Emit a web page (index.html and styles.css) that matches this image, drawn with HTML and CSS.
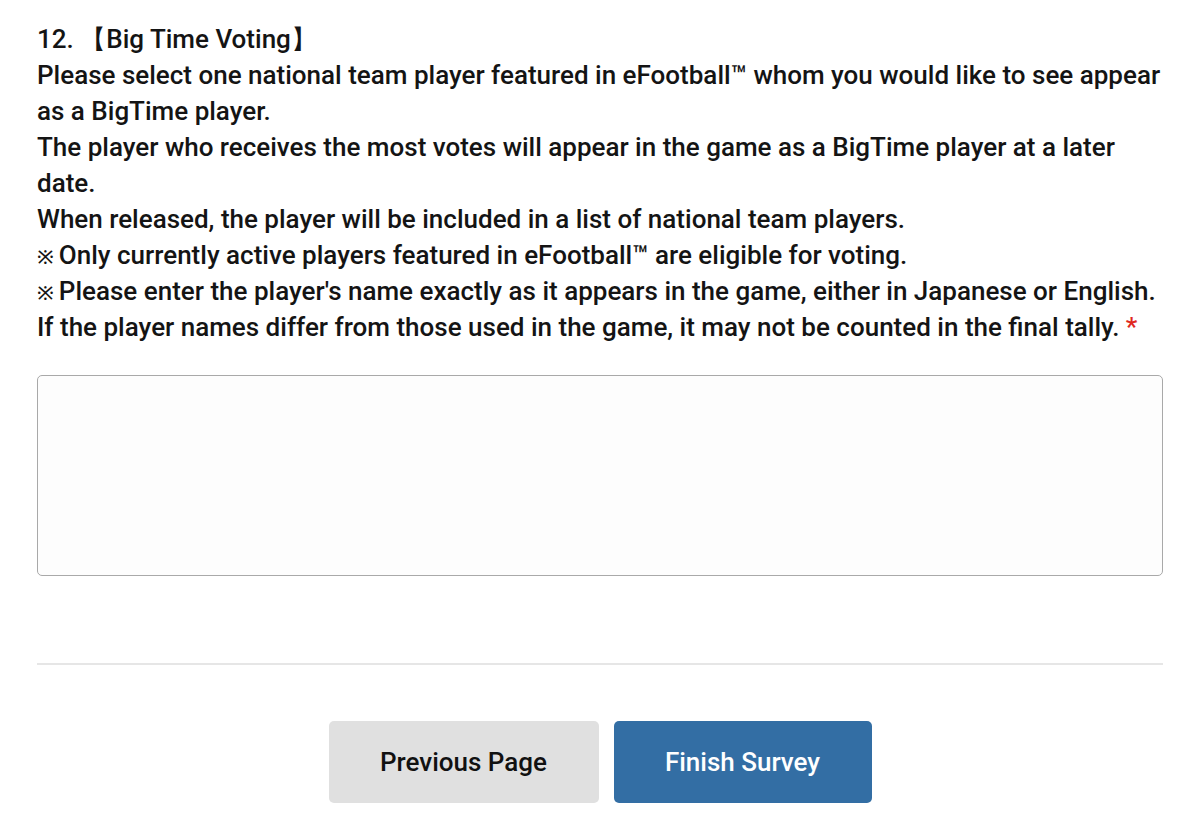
FILE: index.html
```html
<!DOCTYPE html>
<html lang="en">
<head>
    <meta charset="UTF-8">
    <meta name="viewport" content="width=device-width, initial-scale=1.0">
    <title>Survey</title>
    <link rel="stylesheet" href="styles.css">
</head>
<body>
<div class="container">
    <div class="question">
        <p class="question-title">12. 【Big Time Voting】</p>
        <p>Please select one national team player featured in eFootball™ whom you would like to see appear as a BigTime player.</p>
        <p>The player who receives the most votes will appear in the game as a BigTime player at a later date.</p>
        <p>When released, the player will be included in a list of national team players.</p>
        <p><span class="mark">※</span>Only currently active players featured in eFootball™ are eligible for voting.</p>
        <p><span class="mark">※</span>Please enter the player's name exactly as it appears in the game, either in Japanese or English.</p>
        <p>If the player names differ from those used in the game, it may not be counted in the final tally. <span class="required">*</span></p>
    </div>
    <textarea class="answer"></textarea>
    <hr class="divider">
    <div class="buttons">
        <button class="btn btn-prev">Previous Page</button>
        <button class="btn btn-finish">Finish Survey</button>
    </div>
</div>
</body>
</html>
```

FILE: styles.css
```css
body {
    font-family: Roboto, "Noto Sans", sans-serif;
    margin: 0;
    background-color: #fff;
    color: #141414;
}
.container {
    padding: 21px 37px 0 37px;
}
.question {
    font-size: 26px;
    font-weight: 500;
    line-height: 36px;
}
.question p {
    margin: 0;
}
.mark {
    font-size: 20px;
    line-height: 0;
    margin-right: 5px;
}
.required {
    color: #e0281e;
}
.answer {
    display: block;
    box-sizing: border-box;
    width: 100%;
    height: 201px;
    margin-top: 30px;
    border: 1px solid #a9a9a9;
    border-radius: 5px;
    background: #fdfdfd;
    resize: none;
}
.divider {
    border: none;
    border-top: 2px solid #e6e6e6;
    margin: 87px 0 0 0;
}
.buttons {
    display: flex;
    justify-content: center;
    gap: 15px;
    margin-top: 56px;
}
.btn {
    height: 82px;
    border: none;
    border-radius: 5px;
    font-family: Roboto, sans-serif;
    font-size: 26px;
    font-weight: 500;
}
.btn-prev {
    width: 270px;
    background-color: #e0e0e0;
    color: #111;
}
.btn-finish {
    width: 258px;
    background-color: #336ea4;
    color: #fff;
}
```
